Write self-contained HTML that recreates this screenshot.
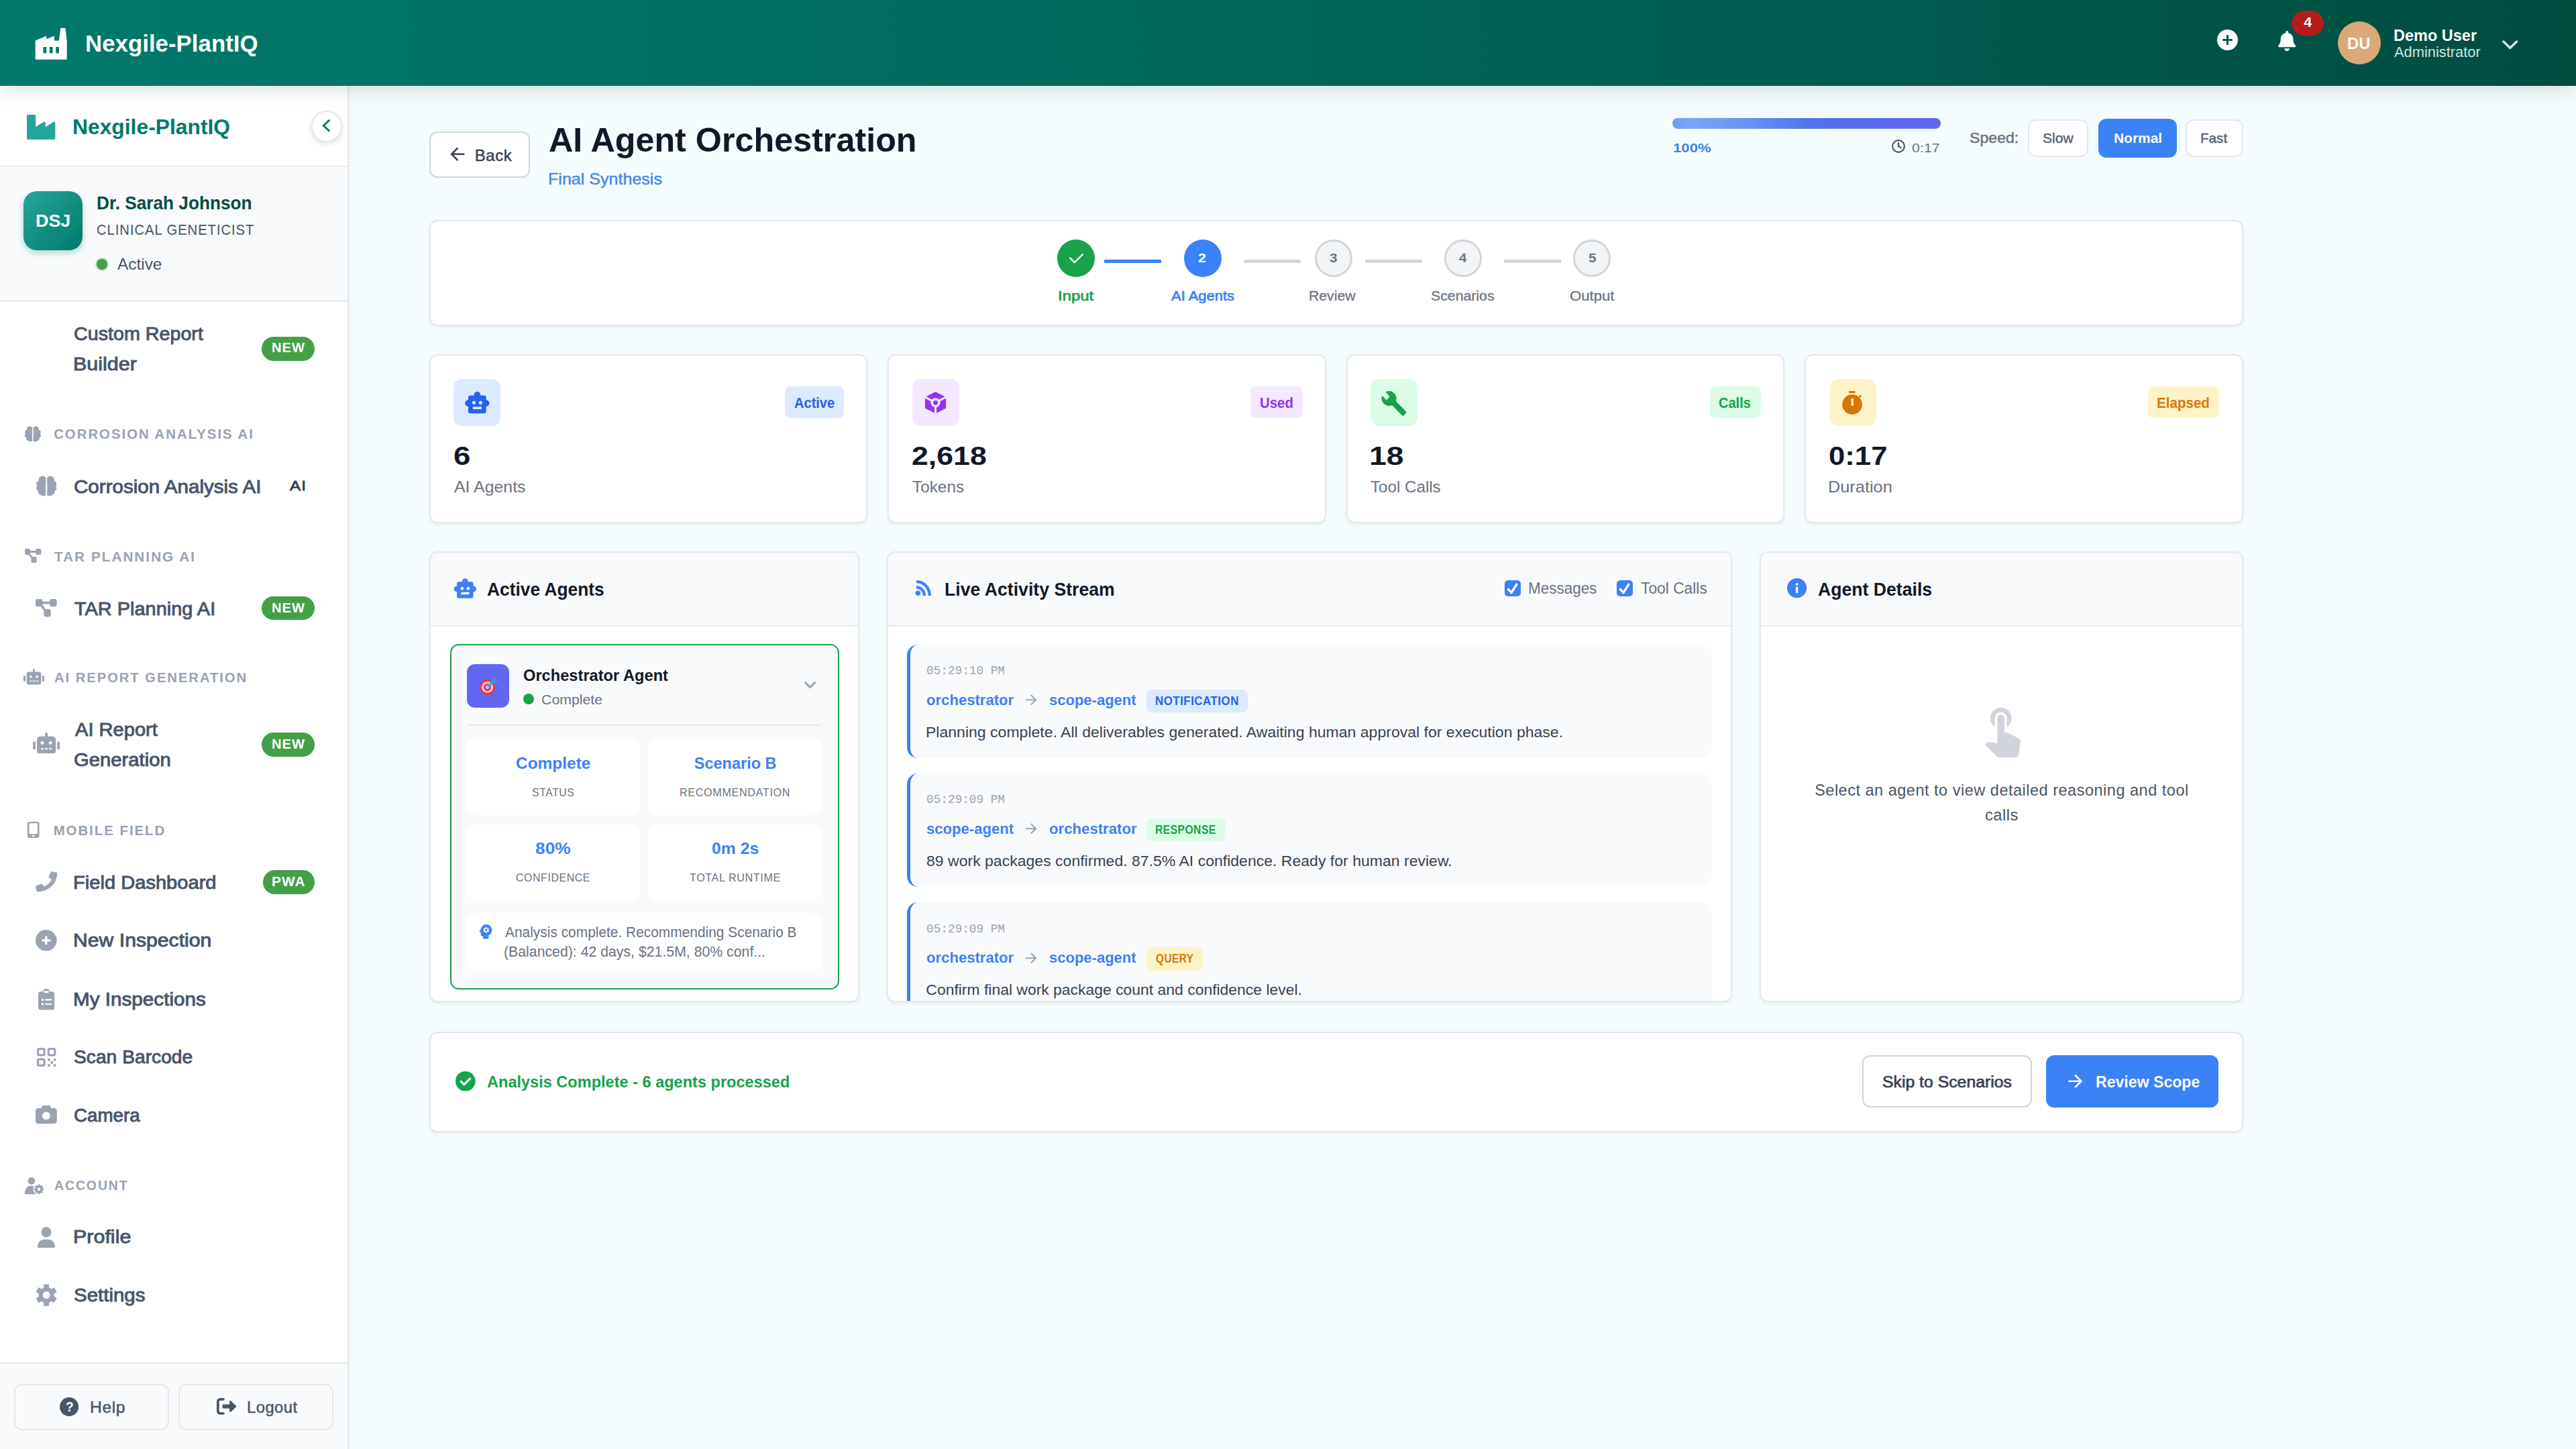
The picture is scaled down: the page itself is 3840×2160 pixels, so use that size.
<!DOCTYPE html>
<html lang="en"><head><meta charset="utf-8"><title>Nexgile-PlantIQ - AI Agent Orchestration</title>
<style>
html,body{margin:0;padding:0}
body{width:3840px;height:2160px;position:relative;overflow:hidden;background:#f5fcfe;font-family:"Liberation Sans",sans-serif}
div,svg,span.t{position:absolute;box-sizing:border-box}
span.t{white-space:nowrap;transform-origin:0 50%}
svg{overflow:visible}

</style></head><body>
<div style="left:0px;top:0px;width:3840px;height:128px;background:linear-gradient(90deg,#00796b 0%,#00695c 45%,#004d40 100%);box-shadow:0 4px 30px rgba(0,0,0,.14);z-index:5"></div>
<div style="left:0;top:0;width:3840px;height:128px;z-index:6">
<svg style="left:47.6px;top:37px" width="56.40" height="56.40" viewBox="0 0 24 24" ><path fill="#fff" fill-rule="evenodd" d="M22 22H2V10l7-3v2l5-2v3h3l1-8h3l1 8v12zM7 14v4h2v-4H7zm4 0v4h2v-4h-2zm4 0v4h2v-4h-2z"/></svg>
<span id="t1" class="t" style="left:127.47px;top:46px;font-size:34.3px;line-height:38px;color:#fff;font-weight:700;transform:scaleX(1.0162);">Nexgile-PlantIQ</span>
<svg style="left:3305px;top:44.4px" width="31.00" height="31.00" viewBox="0 0 31 31" ><circle cx="15.5" cy="15.5" r="15.5" fill="#fff"/><path d="M15.5 8.2v14.6M8.2 15.5h14.6" stroke="#005a4c" stroke-width="3" fill="none"/></svg>
<svg style="left:3396px;top:45.5px" width="26.20" height="29.90" viewBox="0 0 448 512" ><path fill="#fff" d="M224 512c35.32 0 63.97-28.65 63.97-64H160.03c0 35.35 28.65 64 63.97 64zm215.39-149.71c-19.32-20.76-55.47-51.99-55.47-154.29 0-77.7-54.48-139.9-127.94-155.16V32c0-17.67-14.32-32-31.98-32s-31.98 14.33-31.98 32v20.84C118.56 68.1 64.08 130.3 64.08 208c0 102.3-36.15 133.53-55.47 154.29-6 6.45-8.66 14.16-8.61 21.71.11 16.4 12.98 32 32.1 32h383.8c19.12 0 32-15.6 32.1-32 .05-7.55-2.61-15.27-8.61-21.71z"/></svg>
<div style="left:3416px;top:16.2px;width:48.4px;height:36.5px;background:#b71c1c;border-radius:18.5px"></div>
<span id="t2" class="t" style="left:3434.36px;top:21px;font-size:20.58px;line-height:23px;color:#fff;font-weight:700;transform:scaleX(1.0788);">4</span>
<div style="left:3485px;top:32px;width:64px;height:64px;background:#dba978;border-radius:50%"></div>
<span id="t3" class="t" style="left:3499.31px;top:52px;font-size:23.52px;line-height:26px;color:#fff;font-weight:700;transform:scaleX(1.0110);">DU</span>
<span id="t4" class="t" style="left:3567.73px;top:39px;font-size:24.01px;line-height:27px;color:#fff;font-weight:700;transform:scaleX(0.9788);">Demo User</span>
<span id="t5" class="t" style="left:3569.26px;top:65px;font-size:21.56px;line-height:25px;color:#cfe6e2;transform:scaleX(1.0139);">Administrator</span>
<svg style="left:3729.5px;top:59.5px" width="23.50" height="14.00" viewBox="0 0 23.5 14" ><path d="M2 2l9.75 9.5L21.5 2" stroke="#d5e9e5" stroke-width="3.4" fill="none" stroke-linecap="round" stroke-linejoin="round"/></svg>
</div>
<div style="left:0px;top:128px;width:520px;height:2032px;background:#fff;border-right:2px solid #e5e7eb;box-shadow:2px 0 6px rgba(0,0,0,.03)"></div>
<svg style="left:40.3px;top:170.8px" width="42.40" height="37.10" viewBox="0 0 512 448" ><path fill="#26a69a" d="M475.115 131.781L336 220.309v-68.28c0-18.916-20.931-30.399-36.885-20.248L160 220.309V24c0-13.255-10.745-24-24-24H24C10.745 0 0 10.745 0 24v400c0 13.255 10.745 24 24 24h464c13.255 0 24-10.745 24-24V152.029c0-18.917-20.931-30.399-36.885-20.248z"/></svg>
<span id="t6" class="t" style="left:108.27px;top:172px;font-size:31.36px;line-height:35px;color:#00796b;font-weight:700;transform:scaleX(1.0142);">Nexgile-PlantIQ</span>
<div style="left:463.5px;top:165px;width:46.5px;height:46.5px;background:#fff;border:2px solid #e5e7eb;border-radius:50%;box-shadow:0 3px 8px rgba(0,0,0,.12)"></div>
<svg style="left:479.5px;top:178px" width="12.50" height="18.50" viewBox="0 0 12.5 18.5" ><path d="M10.5 1.5L2.2 9.25l8.3 7.75" stroke="#00796b" stroke-width="3" fill="none" stroke-linecap="round" stroke-linejoin="round"/></svg>
<div style="left:0px;top:247px;width:518px;height:2px;background:#e5e7eb"></div>
<div style="left:0px;top:249px;width:518px;height:199px;background:#f8fafc"></div>
<div style="left:0px;top:447.5px;width:518px;height:2px;background:#e5e7eb"></div>
<div style="left:35.3px;top:284.7px;width:88px;height:88px;background:linear-gradient(135deg,#26a69a 0%,#00796b 100%);border-radius:20px;box-shadow:0 4px 10px rgba(0,105,92,.28)"></div>
<span id="t7" class="t" style="left:53.3px;top:315px;font-size:25.48px;line-height:28px;color:#fff;font-weight:700;transform:scaleX(1.0542);">DSJ</span>
<span id="t8" class="t" style="left:143.75px;top:287px;font-size:27.44px;line-height:31px;color:#004d40;font-weight:700;transform:scaleX(0.9548);">Dr. Sarah Johnson</span>
<span id="t9" class="t" style="left:144.47px;top:330px;font-size:21.56px;line-height:25px;color:#4b5563;letter-spacing:1px;transform:scaleX(0.9395);">CLINICAL GENETICIST</span>
<div style="left:144.4px;top:385.6px;width:16px;height:16px;background:#43a047;border-radius:50%;box-shadow:0 0 0 2px rgba(67,160,71,.30)"></div>
<span id="t10" class="t" style="left:175.25px;top:380px;font-size:24.01px;line-height:27px;color:#4b5563;transform:scaleX(1.0164);">Active</span>
<span id="t11" class="t" style="left:110.14px;top:482px;font-size:27.44px;line-height:31px;color:#475569;-webkit-text-stroke:0.9px currentColor;transform:scaleX(1.0453);">Custom Report</span>
<span id="t12" class="t" style="left:109.1px;top:527px;font-size:27.44px;line-height:31px;color:#475569;-webkit-text-stroke:0.9px currentColor;transform:scaleX(1.1110);">Builder</span>
<div style="left:390.2px;top:502px;width:79px;height:35.5px;background:#43a047;border-radius:17.75px"></div>
<span id="t13" class="t" style="left:404.55px;top:507px;font-size:19.6px;line-height:22px;color:#fff;font-weight:700;letter-spacing:1px;transform:scaleX(1.0283);">NEW</span>
<span id="t14" class="t" style="left:80.16px;top:636px;font-size:20.38px;line-height:22px;color:#98a2b3;font-weight:700;letter-spacing:2px;">CORROSION ANALYSIS AI</span>
<span id="t15" class="t" style="left:110.1px;top:710px;font-size:27.44px;line-height:31px;color:#475569;-webkit-text-stroke:0.9px currentColor;transform:scaleX(1.0778);">Corrosion Analysis AI</span>
<span id="t16" class="t" style="left:431.55px;top:713px;font-size:19.6px;line-height:22px;color:#374151;letter-spacing:1px;-webkit-text-stroke:0.8px currentColor;transform:scaleX(1.2338);">AI</span>
<span id="t17" class="t" style="left:80.77px;top:819px;font-size:20.38px;line-height:22px;color:#98a2b3;font-weight:700;letter-spacing:2px;transform:scaleX(1.0167);">TAR PLANNING AI</span>
<span id="t18" class="t" style="left:110.95px;top:892px;font-size:27.44px;line-height:31px;color:#475569;-webkit-text-stroke:0.9px currentColor;transform:scaleX(1.0548);">TAR Planning AI</span>
<div style="left:390.2px;top:888.7px;width:79px;height:35.5px;background:#43a047;border-radius:17.75px"></div>
<span id="t19" class="t" style="left:404.55px;top:895px;font-size:19.6px;line-height:22px;color:#fff;font-weight:700;letter-spacing:1px;transform:scaleX(1.0283);">NEW</span>
<span id="t20" class="t" style="left:80.5px;top:999px;font-size:20.38px;line-height:22px;color:#98a2b3;font-weight:700;letter-spacing:2px;transform:scaleX(0.9908);">AI REPORT GENERATION</span>
<span id="t21" class="t" style="left:111.54px;top:1072px;font-size:27.44px;line-height:31px;color:#475569;-webkit-text-stroke:0.9px currentColor;transform:scaleX(1.0601);">AI Report</span>
<span id="t22" class="t" style="left:110.13px;top:1117px;font-size:27.44px;line-height:31px;color:#475569;-webkit-text-stroke:0.9px currentColor;transform:scaleX(1.0656);">Generation</span>
<div style="left:390.2px;top:1092.3px;width:79px;height:35.5px;background:#43a047;border-radius:17.75px"></div>
<span id="t23" class="t" style="left:404.55px;top:1098px;font-size:19.6px;line-height:22px;color:#fff;font-weight:700;letter-spacing:1px;transform:scaleX(1.0283);">NEW</span>
<span id="t24" class="t" style="left:79.63px;top:1227px;font-size:20.38px;line-height:22px;color:#98a2b3;font-weight:700;letter-spacing:2px;">MOBILE FIELD</span>
<span id="t25" class="t" style="left:109.21px;top:1300px;font-size:27.44px;line-height:31px;color:#475569;-webkit-text-stroke:0.9px currentColor;transform:scaleX(1.0608);">Field Dashboard</span>
<div style="left:391.8px;top:1297.2px;width:77.2px;height:35.5px;background:#43a047;border-radius:17.75px"></div>
<span id="t26" class="t" style="left:405px;top:1303px;font-size:19.6px;line-height:22px;color:#fff;font-weight:700;letter-spacing:1px;transform:scaleX(1.0644);">PWA</span>
<span id="t27" class="t" style="left:109.12px;top:1386px;font-size:27.44px;line-height:31px;color:#475569;-webkit-text-stroke:0.9px currentColor;transform:scaleX(1.0999);">New Inspection</span>
<span id="t28" class="t" style="left:109.17px;top:1474px;font-size:27.44px;line-height:31px;color:#475569;-webkit-text-stroke:0.9px currentColor;transform:scaleX(1.0809);">My Inspections</span>
<span id="t29" class="t" style="left:110.32px;top:1560px;font-size:27.44px;line-height:31px;color:#475569;-webkit-text-stroke:0.9px currentColor;transform:scaleX(1.0283);">Scan Barcode</span>
<span id="t30" class="t" style="left:110.19px;top:1647px;font-size:27.44px;line-height:31px;color:#475569;-webkit-text-stroke:0.9px currentColor;transform:scaleX(1.0114);">Camera</span>
<span id="t31" class="t" style="left:80.52px;top:1756px;font-size:20.38px;line-height:22px;color:#98a2b3;font-weight:700;letter-spacing:2px;transform:scaleX(0.9552);">ACCOUNT</span>
<span id="t32" class="t" style="left:109.1px;top:1828px;font-size:27.44px;line-height:31px;color:#475569;-webkit-text-stroke:0.9px currentColor;transform:scaleX(1.1102);">Profile</span>
<span id="t33" class="t" style="left:110.26px;top:1915px;font-size:27.44px;line-height:31px;color:#475569;-webkit-text-stroke:0.9px currentColor;transform:scaleX(1.0743);">Settings</span>
<svg style="left:37.1px;top:635px" width="23.90" height="23.70" viewBox="0 0 100 100" preserveAspectRatio="none"><defs><clipPath id="bl37"><rect x="0" y="0" width="46.5" height="100"/></clipPath><clipPath id="br37"><rect x="53.5" y="0" width="46.5" height="100"/></clipPath></defs><g fill="#9aa3b2"><g clip-path="url(#bl37)"><circle cx="31" cy="21" r="19"/><circle cx="16" cy="40" r="15.5"/><circle cx="14" cy="61" r="14"/><circle cx="24" cy="78" r="15"/><circle cx="36" cy="86" r="13"/><rect x="20" y="10" width="40" height="86" rx="6"/></g><g clip-path="url(#br37)"><circle cx="69" cy="21" r="19"/><circle cx="84" cy="40" r="15.5"/><circle cx="86" cy="61" r="14"/><circle cx="76" cy="78" r="15"/><circle cx="64" cy="86" r="13"/><rect x="40" y="10" width="40" height="86" rx="6"/></g></g></svg>
<svg style="left:53.8px;top:709px" width="30.50" height="30.70" viewBox="0 0 100 100" preserveAspectRatio="none"><defs><clipPath id="bl53"><rect x="0" y="0" width="46.5" height="100"/></clipPath><clipPath id="br53"><rect x="53.5" y="0" width="46.5" height="100"/></clipPath></defs><g fill="#9aa3b2"><g clip-path="url(#bl53)"><circle cx="31" cy="21" r="19"/><circle cx="16" cy="40" r="15.5"/><circle cx="14" cy="61" r="14"/><circle cx="24" cy="78" r="15"/><circle cx="36" cy="86" r="13"/><rect x="20" y="10" width="40" height="86" rx="6"/></g><g clip-path="url(#br53)"><circle cx="69" cy="21" r="19"/><circle cx="84" cy="40" r="15.5"/><circle cx="86" cy="61" r="14"/><circle cx="76" cy="78" r="15"/><circle cx="64" cy="86" r="13"/><rect x="40" y="10" width="40" height="86" rx="6"/></g></g></svg>
<svg style="left:37.1px;top:818.3px" width="24.40" height="20.90" viewBox="0 32 576 448" preserveAspectRatio="none"><path fill="#9aa3b2" d="M0 80C0 53.5 21.5 32 48 32h96c26.5 0 48 21.5 48 48V96H384V80c0-26.5 21.5-48 48-48h96c26.5 0 48 21.5 48 48v96c0 26.5-21.5 48-48 48H432c-26.5 0-48-21.5-48-48V160H192v16c0 1.7-.1 3.400-.3 5L272 288h96c26.500 0 48 21.500 48 48v96c0 26.500-21.500 48-48 48H272c-26.500 0-48-21.500-48-48V336c0-1.700 .1-3.400 .3-5L144 224H48c-26.500 0-48-21.500-48-48V80z"/></svg>
<svg style="left:53.1px;top:893px" width="31.60" height="26.40" viewBox="0 32 576 448" preserveAspectRatio="none"><path fill="#9aa3b2" d="M0 80C0 53.5 21.5 32 48 32h96c26.5 0 48 21.5 48 48V96H384V80c0-26.5 21.5-48 48-48h96c26.5 0 48 21.5 48 48v96c0 26.5-21.5 48-48 48H432c-26.5 0-48-21.5-48-48V160H192v16c0 1.7-.1 3.400-.3 5L272 288h96c26.500 0 48 21.500 48 48v96c0 26.500-21.500 48-48 48H272c-26.500 0-48-21.500-48-48V336c0-1.700 .1-3.400 .3-5L144 224H48c-26.500 0-48-21.500-48-48V80z"/></svg>
<svg style="left:34.9px;top:996.9px" width="31.10" height="23.40" viewBox="0 0 640 512" preserveAspectRatio="none"><path fill="#9aa3b2" d="M32,224H64V416H32A31.96166,31.96166,0,0,1,0,384V256A31.96166,31.96166,0,0,1,32,224Zm512-48V448a64.06328,64.06328,0,0,1-64,64H160a64.06328,64.06328,0,0,1-64-64V176a79.974,79.974,0,0,1,80-80H288V32a32,32,0,0,1,64,0V96H464A79.974,79.974,0,0,1,544,176ZM264,256a40,40,0,1,0-40,40A39.997,39.997,0,0,0,264,256Zm-8,128H192v32h64Zm96,0H288v32h64ZM456,256a40,40,0,1,0-40,40A39.997,39.997,0,0,0,456,256Zm-8,128H384v32h64ZM640,256V384a31.96166,31.96166,0,0,1-32,32H576V224h32A31.96166,31.96166,0,0,1,640,256Z"/></svg>
<svg style="left:49px;top:1092px" width="40.20" height="31.00" viewBox="0 0 640 512" preserveAspectRatio="none"><path fill="#9aa3b2" d="M32,224H64V416H32A31.96166,31.96166,0,0,1,0,384V256A31.96166,31.96166,0,0,1,32,224Zm512-48V448a64.06328,64.06328,0,0,1-64,64H160a64.06328,64.06328,0,0,1-64-64V176a79.974,79.974,0,0,1,80-80H288V32a32,32,0,0,1,64,0V96H464A79.974,79.974,0,0,1,544,176ZM264,256a40,40,0,1,0-40,40A39.997,39.997,0,0,0,264,256Zm-8,128H192v32h64Zm96,0H288v32h64ZM456,256a40,40,0,1,0-40,40A39.997,39.997,0,0,0,456,256Zm-8,128H384v32h64ZM640,256V384a31.96166,31.96166,0,0,1-32,32H576V224h32A31.96166,31.96166,0,0,1,640,256Z"/></svg>
<svg style="left:40.6px;top:1224.7px" width="17.60" height="24.10" viewBox="0 0 320 512" preserveAspectRatio="none"><path fill="#9aa3b2" d="M272 0H48C21.5 0 0 21.5 0 48v416c0 26.5 21.5 48 48 48h224c26.5 0 48-21.5 48-48V48c0-26.5-21.5-48-48-48zM160 480c-17.7 0-32-14.3-32-32s14.3-32 32-32 32 14.3 32 32-14.3 32-32 32zm112-108c0 6.6-5.4 12-12 12H60c-6.6 0-12-5.4-12-12V60c0-6.6 5.4-12 12-12h200c6.6 0 12 5.4 12 12v312z"/></svg>
<svg style="left:53px;top:1299.2px" width="32.20" height="30.40" viewBox="0 0 512 512" preserveAspectRatio="none"><path fill="#9aa3b2" d="M493.4 24.6l-104-24c-11.3-2.6-22.9 3.3-27.5 13.9l-48 112c-4.2 9.8-1.4 21.3 6.9 28l60.6 49.6c-36 76.7-98.9 140.5-177.2 177.2l-49.6-60.6c-6.8-8.3-18.2-11.1-28-6.9l-112 48C3.9 366.5-2 378.1.6 389.4l24 104C27.1 504.2 36.7 512 48 512c256.1 0 464-207.5 464-464 0-11.2-7.7-20.9-18.6-23.4z"/></svg>
<svg style="left:53.2px;top:1386px" width="31.60" height="31.60" viewBox="0 0 32 32" ><circle cx="16" cy="16" r="16" fill="#9aa3b2"/><path d="M16 9.5v13M9.5 16h13" stroke="#fff" stroke-width="3.2" fill="none"/></svg>
<svg style="left:57.2px;top:1473.6px" width="24.10" height="31.40" viewBox="0 0 384 512" preserveAspectRatio="none"><path fill="#9aa3b2" fill-rule="evenodd" d="M56 64h56c0-36 34-64 80-64s80 28 80 64h56c31 0 56 25 56 56v336c0 31-25 56-56 56H56c-31 0-56-25-56-56V120c0-31 25-56 56-56z M152 52h80c14 0 22 10 22 22s-8 22-22 22h-80c-14 0-22-10-22-22s8-22 22-22z M104 238a28 28 0 1 0 0.100 0z M180 250h128c11 0 18 7 18 17s-7 17-18 17H180c-11 0-18-7-18-17s7-17 18-17z M104 342a28 28 0 1 0 0.100 0z M180 354h128c11 0 18 7 18 17s-7 17-18 17H180c-11 0-18-7-18-17s7-17 18-17z"/></svg>
<svg style="left:55px;top:1561.7px" width="28.40" height="27.80" viewBox="0 0 448 448" preserveAspectRatio="none"><rect x="25" y="25" width="150" height="150" rx="30" fill="none" stroke="#9aa3b2" stroke-width="50"/><rect x="273" y="25" width="150" height="150" rx="30" fill="none" stroke="#9aa3b2" stroke-width="50"/><rect x="25" y="273" width="150" height="150" rx="30" fill="none" stroke="#9aa3b2" stroke-width="50"/><rect x="256" y="256" width="58" height="58" rx="14" fill="#9aa3b2"/><rect x="390" y="256" width="58" height="58" rx="14" fill="#9aa3b2"/><rect x="323" y="323" width="58" height="58" rx="14" fill="#9aa3b2"/><rect x="256" y="390" width="58" height="58" rx="14" fill="#9aa3b2"/><rect x="390" y="390" width="58" height="58" rx="14" fill="#9aa3b2"/></svg>
<svg style="left:53.2px;top:1648px" width="31.80" height="27.00" viewBox="0 0 512 436" preserveAspectRatio="none"><path fill="#9aa3b2" fill-rule="evenodd" d="M64 64h72l18-40c6-14 20-24 36-24h132c16 0 30 10 36 24l18 40h72c35 0 64 29 64 64v244c0 35-29 64-64 64H64c-35 0-64-29-64-64V128c0-35 29-64 64-64z M256 152a96 96 0 1 0 0.100 0z"/></svg>
<svg style="left:37.2px;top:1755.2px" width="28.40" height="25.20" viewBox="0 0 640 568" preserveAspectRatio="none"><circle cx="225" cy="120" r="120" fill="#9aa3b2"/><path fill="#9aa3b2" d="M0 520C0 400 80 290 190 290h70c110 0 190 110 190 230v48H0z"/><circle cx="474" cy="402" r="196" fill="#fff"/><path fill="#9aa3b2" fill-rule="evenodd" d="M441.2 274.1 L445.1 236.5 L502.9 236.5 L506.8 274.1 L541.2 288.4 L570.6 264.6 L611.4 305.4 L587.6 334.8 L601.9 369.2 L639.5 373.1 L639.5 430.9 L601.9 434.8 L587.6 469.2 L611.4 498.6 L570.6 539.4 L541.2 515.6 L506.8 529.9 L502.9 567.5 L445.1 567.5 L441.2 529.9 L406.8 515.6 L377.4 539.4 L336.6 498.6 L360.4 469.2 L346.1 434.8 L308.5 430.9 L308.5 373.1 L346.1 369.2 L360.4 334.8 L336.6 305.4 L377.4 264.6 L406.8 288.4Z M424.0 402.0 a50.0 50.0 0 1 0 100.0 0 a50.0 50.0 0 1 0 -100.0 0Z"/></svg>
<svg style="left:56.1px;top:1829px" width="25.90" height="31.00" viewBox="0 0 448 512" preserveAspectRatio="none"><circle cx="224" cy="128" r="128" fill="#9aa3b2"/><path fill="#9aa3b2" d="M0 482.3C0 383.8 79.8 304 178.3 304h91.4C368.2 304 448 383.8 448 482.3c0 16.4-13.3 29.7-29.7 29.7H29.7C13.3 512 0 498.7 0 482.3z"/></svg>
<svg style="left:52.9px;top:1913.8px" width="32.30" height="33.20" viewBox="0 0 100 100" preserveAspectRatio="none"><path fill="#9aa3b2" fill-rule="evenodd" d="M37.8 16.1 L38.1 1.4 L61.9 1.4 L62.2 16.1 L73.2 22.5 L86.1 15.4 L98.0 36.1 L85.4 43.6 L85.4 56.4 L98.0 63.9 L86.1 84.6 L73.2 77.5 L62.2 83.9 L61.9 98.6 L38.1 98.6 L37.8 83.9 L26.8 77.5 L13.9 84.6 L2.0 63.9 L14.6 56.4 L14.6 43.6 L2.0 36.1 L13.9 15.4 L26.8 22.5Z M33.0 50.0 a17.0 17.0 0 1 0 34.0 0 a17.0 17.0 0 1 0 -34.0 0Z"/></svg>
<div style="left:0px;top:2031.3px;width:518px;height:2px;background:#e5e7eb"></div>
<div style="left:0px;top:2033.3px;width:518px;height:126.7px;background:#f9fafb"></div>
<div style="left:21.4px;top:2062.9px;width:231px;height:69px;background:#f9fafb;border:2px solid #e5e7eb;border-radius:12px"></div>
<div style="left:266.1px;top:2062.9px;width:230.8px;height:69px;background:#f9fafb;border:2px solid #e5e7eb;border-radius:12px"></div>
<svg style="left:89.4px;top:2082.5px" width="28.20" height="28.20" viewBox="0 0 28 28" ><circle cx="14" cy="14" r="14" fill="#475569"/></svg>
<span id="t34" class="t" style="left:97.82px;top:2085px;font-size:20.58px;line-height:23px;color:#fff;font-weight:700;transform:scaleX(0.9284);">?</span>
<span id="t35" class="t" style="left:134.47px;top:2084px;font-size:24.5px;line-height:27px;color:#475569;letter-spacing:0.5px;-webkit-text-stroke:0.5px currentColor;transform:scaleX(1.0112);">Help</span>
<svg style="left:322.5px;top:2084px" width="29.10" height="24.80" viewBox="0 0 512 436" preserveAspectRatio="none"><path d="M176 32H96c-35 0-64 29-64 64v244c0 35 29 64 64 64h80" fill="none" stroke="#475569" stroke-width="64" stroke-linecap="round"/><path fill="#475569" d="M176 166h160v-72c0-22 26-32 41-17l128 124c10 10 10 26 0 36L377 361c-15 15-41 5-41-17v-72H176c-14 0-24-10-24-24v-58c0-14 10-24 24-24z"/></svg>
<span id="t36" class="t" style="left:368.15px;top:2084px;font-size:24.5px;line-height:27px;color:#475569;letter-spacing:0.5px;-webkit-text-stroke:0.5px currentColor;transform:scaleX(0.9701);">Logout</span>
<div style="left:640px;top:195.7px;width:149.8px;height:69.2px;background:#fff;border:2px solid #d1d5db;border-radius:12px"></div>
<svg style="left:665.7px;top:214.2px" width="31.60" height="31.60" viewBox="0 0 24 24" ><path fill="#374151" d="M7.828 11H20v2H7.828l5.364 5.364-1.414 1.414L4 12l7.778-7.778 1.414 1.414z"/></svg>
<span id="t37" class="t" style="left:707.83px;top:218px;font-size:24.01px;line-height:27px;color:#374151;letter-spacing:0.5px;-webkit-text-stroke:0.5px currentColor;">Back</span>
<span id="t38" class="t" style="left:818.15px;top:181px;font-size:49.29px;line-height:55px;color:#111827;font-weight:700;transform:scaleX(1.0204);">AI Agent Orchestration</span>
<span id="t39" class="t" style="left:817.34px;top:253px;font-size:24.01px;line-height:27px;color:#4285ee;-webkit-text-stroke:0.45px currentColor;transform:scaleX(1.0443);">Final Synthesis</span>
<div style="left:2492.8px;top:175.9px;width:400px;height:16px;border-radius:8px;background:linear-gradient(90deg,#6e9ef6 0%,#78a6f8 8%,#6591f4 30%,#4f73ee 52%,#5969f0 75%,#6366f1 100%)"></div>
<span id="t40" class="t" style="left:2493.5px;top:210px;font-size:19.11px;line-height:21px;color:#3b82f6;font-weight:700;transform:scaleX(1.1597);">100%</span>
<svg style="left:2817.8px;top:206.1px" width="24.00" height="24.00" viewBox="0 0 24 24" ><circle cx="12" cy="12" r="8.900" fill="none" stroke="#4b5563" stroke-width="2.100"/><path d="M12 6.800V12l3.700 2.300" fill="none" stroke="#4b5563" stroke-width="2.100" stroke-linecap="round" stroke-linejoin="round"/></svg>
<span id="t41" class="t" style="left:2850.16px;top:210px;font-size:19.11px;line-height:21px;color:#6b7280;transform:scaleX(1.1241);">0:17</span>
<span id="t42" class="t" style="left:2935.55px;top:193px;font-size:21.95px;line-height:25px;color:#6b7280;-webkit-text-stroke:0.5px currentColor;transform:scaleX(1.0537);">Speed:</span>
<div style="left:3023.2px;top:178px;width:89.5px;height:56.4px;background:#fff;border:2px solid #e5e7eb;border-radius:12px"></div>
<span id="t43" class="t" style="left:3044.64px;top:195px;font-size:20.38px;line-height:22px;color:#566070;-webkit-text-stroke:0.45px currentColor;transform:scaleX(1.0355);">Slow</span>
<div style="left:3128px;top:177.3px;width:116.8px;height:57.6px;background:#3b82f6;border-radius:12px"></div>
<span id="t44" class="t" style="left:3150.8px;top:195px;font-size:20.38px;line-height:22px;color:#fff;font-weight:700;transform:scaleX(1.0275);">Normal</span>
<div style="left:3258.4px;top:178px;width:85.2px;height:56.4px;background:#fff;border:2px solid #e5e7eb;border-radius:12px"></div>
<span id="t45" class="t" style="left:3280.41px;top:195px;font-size:20.38px;line-height:22px;color:#566070;-webkit-text-stroke:0.45px currentColor;transform:scaleX(1.0136);">Fast</span>
<div style="left:640px;top:328px;width:2703.5px;height:158.4px;background:#fff;border:2px solid #e5e7eb;border-radius:12px;box-shadow:0 2px 5px rgba(0,0,0,.06)"></div>
<div style="left:1576px;top:356.6px;width:56px;height:56px;background:#16a34a;border-radius:50%;"></div>
<svg style="left:1588.6px;top:369.6px" width="30.80" height="30.80" viewBox="0 0 24 24" ><path fill="#fff" d="M10 15.172l9.192-9.193 1.415 1.414L10 18l-6.364-6.364 1.414-1.414z"/></svg>
<div style="left:1646.2px;top:386.6px;width:85px;height:5.5px;background:#3b82f6;border-radius:1px"></div>
<div style="left:1764.8px;top:356.6px;width:56px;height:56px;background:#3b82f6;border-radius:50%;"></div>
<span id="t46" class="t" style="left:1786.46px;top:374px;font-size:19.11px;line-height:21px;color:#fff;font-weight:700;transform:scaleX(1.1180);">2</span>
<div style="left:1854.4px;top:386.6px;width:85px;height:5.5px;background:#d1d5db;border-radius:1px"></div>
<div style="left:1959.6px;top:356.6px;width:56px;height:56px;background:#f3f4f6;border-radius:50%;border:3px solid #d1d5db;"></div>
<span id="t47" class="t" style="left:1981.83px;top:374px;font-size:19.11px;line-height:21px;color:#6b7280;font-weight:700;transform:scaleX(1.0829);">3</span>
<div style="left:2035.3px;top:386.6px;width:85px;height:5.5px;background:#d1d5db;border-radius:1px"></div>
<div style="left:2152.9px;top:356.6px;width:56px;height:56px;background:#f3f4f6;border-radius:50%;border:3px solid #d1d5db;"></div>
<span id="t48" class="t" style="left:2175.29px;top:374px;font-size:19.11px;line-height:21px;color:#6b7280;font-weight:700;transform:scaleX(1.0635);">4</span>
<div style="left:2241.5px;top:386.6px;width:85px;height:5.5px;background:#d1d5db;border-radius:1px"></div>
<div style="left:2345.2px;top:356.6px;width:56px;height:56px;background:#f3f4f6;border-radius:50%;border:3px solid #d1d5db;"></div>
<span id="t49" class="t" style="left:2367.56px;top:374px;font-size:19.11px;line-height:21px;color:#6b7280;font-weight:700;transform:scaleX(1.0818);">5</span>
<span id="t50" class="t" style="left:1576.99px;top:430px;font-size:20.38px;line-height:22px;color:#16a34a;-webkit-text-stroke:0.7px currentColor;transform:scaleX(1.1741);">Input</span>
<span id="t51" class="t" style="left:1746.16px;top:430px;font-size:20.38px;line-height:22px;color:#3b82f6;-webkit-text-stroke:0.7px currentColor;transform:scaleX(1.0790);">AI Agents</span>
<span id="t52" class="t" style="left:1951.46px;top:430px;font-size:20.38px;line-height:22px;color:#6b7280;-webkit-text-stroke:0.3px currentColor;transform:scaleX(1.0408);">Review</span>
<span id="t53" class="t" style="left:2133.43px;top:430px;font-size:20.38px;line-height:22px;color:#6b7280;-webkit-text-stroke:0.3px currentColor;transform:scaleX(1.0440);">Scenarios</span>
<span id="t54" class="t" style="left:2339.75px;top:430px;font-size:20.38px;line-height:22px;color:#6b7280;-webkit-text-stroke:0.3px currentColor;transform:scaleX(1.0881);">Output</span>
<div style="left:640px;top:528px;width:653.4px;height:252.4px;background:#fff;border:2px solid #e5e7eb;border-radius:12px;box-shadow:0 2px 5px rgba(0,0,0,.06)"></div>
<div style="left:676.4px;top:564.9px;width:70px;height:70px;background:#dbeafe;border-radius:13px"></div>
<div style="left:1170px;top:576px;width:88.2px;height:47.4px;background:#dbeafe;border-radius:8px"></div>
<span id="t55" class="t" style="left:1184.2px;top:588px;font-size:21.56px;line-height:25px;color:#2563eb;font-weight:700;transform:scaleX(0.9304);">Active</span>
<span id="t56" class="t" style="left:675.93px;top:657px;font-size:39.69px;line-height:44px;color:#111827;font-weight:700;transform:scaleX(1.1516);">6</span>
<span id="t57" class="t" style="left:676.95px;top:713px;font-size:23.52px;line-height:26px;color:#6b7280;transform:scaleX(1.0584);">AI Agents</span>
<div style="left:1323.4px;top:528px;width:653.4px;height:252.4px;background:#fff;border:2px solid #e5e7eb;border-radius:12px;box-shadow:0 2px 5px rgba(0,0,0,.06)"></div>
<div style="left:1359.8px;top:564.9px;width:70px;height:70px;background:#f3e8ff;border-radius:13px"></div>
<div style="left:1864px;top:576px;width:77.6px;height:47.4px;background:#f3e8ff;border-radius:8px"></div>
<span id="t58" class="t" style="left:1877.67px;top:588px;font-size:21.56px;line-height:25px;color:#9333ea;font-weight:700;transform:scaleX(0.9462);">Used</span>
<span id="t59" class="t" style="left:1359.45px;top:657px;font-size:39.69px;line-height:44px;color:#111827;font-weight:700;transform:scaleX(1.1263);">2,618</span>
<span id="t60" class="t" style="left:1359.85px;top:713px;font-size:23.52px;line-height:26px;color:#6b7280;transform:scaleX(1.0350);">Tokens</span>
<div style="left:2006.8px;top:528px;width:653.4px;height:252.4px;background:#fff;border:2px solid #e5e7eb;border-radius:12px;box-shadow:0 2px 5px rgba(0,0,0,.06)"></div>
<div style="left:2043.2px;top:564.9px;width:70px;height:70px;background:#dcfce7;border-radius:13px"></div>
<div style="left:2548.5px;top:576px;width:76.5px;height:47.4px;background:#dcfce7;border-radius:8px"></div>
<span id="t61" class="t" style="left:2562.28px;top:588px;font-size:21.56px;line-height:25px;color:#16a34a;font-weight:700;transform:scaleX(0.9287);">Calls</span>
<span id="t62" class="t" style="left:2041.49px;top:657px;font-size:39.69px;line-height:44px;color:#111827;font-weight:700;transform:scaleX(1.1653);">18</span>
<span id="t63" class="t" style="left:2043.26px;top:713px;font-size:23.52px;line-height:26px;color:#6b7280;transform:scaleX(1.0271);">Tool Calls</span>
<div style="left:2690.2px;top:528px;width:653.4px;height:252.4px;background:#fff;border:2px solid #e5e7eb;border-radius:12px;box-shadow:0 2px 5px rgba(0,0,0,.06)"></div>
<div style="left:2726.6px;top:564.9px;width:70px;height:70px;background:#fef3c7;border-radius:13px"></div>
<div style="left:3201.5px;top:576px;width:106.9px;height:47.4px;background:#fef3c7;border-radius:8px"></div>
<span id="t64" class="t" style="left:3214.62px;top:588px;font-size:21.56px;line-height:25px;color:#d97706;font-weight:700;transform:scaleX(0.9552);">Elapsed</span>
<span id="t65" class="t" style="left:2726.07px;top:657px;font-size:39.69px;line-height:44px;color:#111827;font-weight:700;transform:scaleX(1.1013);">0:17</span>
<span id="t66" class="t" style="left:2725.12px;top:713px;font-size:23.52px;line-height:26px;color:#6b7280;transform:scaleX(1.0769);">Duration</span>
<svg style="left:677.1px;top:564.9px" width="70.00" height="70.00" viewBox="0 0 70 70" ><g fill="#2563eb"><rect x="21" y="24.5" width="26.7" height="26.7" rx="3.2"/><circle cx="34.4" cy="23.6" r="4.8"/><circle cx="21" cy="36.1" r="4.8"/><circle cx="47.7" cy="36.1" r="4.8"/></g><g fill="#dbeafe"><circle cx="29.5" cy="35.3" r="2.6"/><circle cx="39.3" cy="35.3" r="2.6"/><rect x="27.8" y="41.3" width="13.2" height="3.7"/></g></svg>
<svg style="left:1378.8px;top:584.2px" width="31.10" height="32.60" viewBox="0 0 200 210" preserveAspectRatio="none"><path fill="#9333ea" d="M100 0l100 52v106l-100 52L0 158V52z"/><path d="M100 105L3 52M100 105l97-53M100 105v103" stroke="#f3e8ff" stroke-width="20" fill="none"/><circle cx="100" cy="105" r="45" fill="#f3e8ff"/><circle cx="100" cy="105" r="22" fill="#9333ea"/></svg>
<svg style="left:2058.8px;top:582.9px" width="37.30" height="36.50" viewBox="0 0 240 235" preserveAspectRatio="none"><g fill="#16a34a"><path d="M75 0a72 72 0 0 1 66 98l95 95a14 14 0 0 1 0 20l-18 18a14 14 0 0 1-20 0l-95-95A72 72 0 0 1 8 44l42 42 32-32L42 8A72 72 0 0 1 75 0z"/></g></svg>
<svg style="left:2745.5px;top:582.6px" width="30.10" height="35.10" viewBox="0 0 194 226" preserveAspectRatio="none"><g fill="#d97706"><circle cx="97" cy="129" r="96"/><rect x="65" y="0" width="62" height="20"/><path d="M160 52l16-16 12 12-16 16z"/></g><rect x="87" y="72" width="22" height="68" fill="#fef3c7"/></svg>
<div style="left:640px;top:822px;width:640.5px;height:672px;background:#fff;border:2px solid #e5e7eb;border-radius:12px;box-shadow:0 2px 5px rgba(0,0,0,.06);overflow:hidden"><div style="left:0;top:0;width:100%;height:109.8px;background:#f9fafb;border-bottom:2px solid #e5e7eb"></div></div>
<svg style="left:662px;top:844.7px" width="63.91" height="63.91" viewBox="0 0 70 70" ><g fill="#3b82f6"><rect x="21" y="24.5" width="26.7" height="26.7" rx="3.2"/><circle cx="34.4" cy="23.6" r="4.8"/><circle cx="21" cy="36.1" r="4.8"/><circle cx="47.7" cy="36.1" r="4.8"/></g><g fill="#f9fafb"><circle cx="29.5" cy="35.3" r="2.6"/><circle cx="39.3" cy="35.3" r="2.6"/><rect x="27.8" y="41.3" width="13.2" height="3.7"/></g></svg>
<span id="t67" class="t" style="left:726.34px;top:863px;font-size:27.44px;line-height:31px;color:#111827;font-weight:700;transform:scaleX(0.9598);">Active Agents</span>
<div style="left:671px;top:960.4px;width:580.3px;height:514.7px;background:#f9fafb;border:2px solid #16a34a;border-radius:13px"></div>
<div style="left:696.3px;top:990.1px;width:62.7px;height:64.7px;background:#6366f1;border-radius:12px"></div>
<svg style="left:713.5px;top:1007.5px" width="29.00" height="29.00" viewBox="0 0 58 58" ><circle cx="25" cy="33" r="23.500" fill="#e2365c"/><circle cx="25" cy="33" r="17" fill="#f3cfdb"/><circle cx="25" cy="33" r="11" fill="#e2365c"/><circle cx="25" cy="33" r="5" fill="#f3cfdb"/><path d="M25.500 32.500L31 27" stroke="#7a8aa0" stroke-width="3" stroke-linecap="round"/><path d="M30 28L44 14" stroke="#3fa4e8" stroke-width="8" stroke-linecap="round"/><path d="M39 9l3 8 8 3 9-8-9-2-2-9z" fill="#3b8fe0"/></svg>
<span id="t68" class="t" style="left:780.33px;top:993px;font-size:24.01px;line-height:27px;color:#111827;font-weight:700;transform:scaleX(0.9854);">Orchestrator Agent</span>
<div style="left:779.8px;top:1033.8px;width:16px;height:16px;background:#16a34a;border-radius:50%"></div>
<span id="t69" class="t" style="left:806.62px;top:1032px;font-size:20.38px;line-height:22px;color:#6b7280;transform:scaleX(1.0458);">Complete</span>
<svg style="left:1198.8px;top:1016px" width="17.20" height="10.50" viewBox="0 0 17.2 10.5" ><path d="M1.6 1.6l7 7 7-7" stroke="#9ca3af" stroke-width="3" fill="none" stroke-linecap="round" stroke-linejoin="round"/></svg>
<div style="left:696.4px;top:1079.5px;width:528.3px;height:2px;background:#e5e7eb"></div>
<div style="left:696px;top:1102.3px;width:258.2px;height:112.4px;background:#fff;border-radius:12px"></div>
<span id="t70" class="t" style="left:768.9px;top:1125px;font-size:23.52px;line-height:26px;color:#3b82f6;font-weight:700;transform:scaleX(1.0400);">Complete</span>
<span id="t71" class="t" style="left:792.88px;top:1172px;font-size:16.95px;line-height:19px;color:#6b7280;letter-spacing:0.6px;transform:scaleX(0.9352);">STATUS</span>
<div style="left:966.3px;top:1102.3px;width:258.2px;height:112.4px;background:#fff;border-radius:12px"></div>
<span id="t72" class="t" style="left:1034.72px;top:1125px;font-size:23.52px;line-height:26px;color:#3b82f6;font-weight:700;">Scenario B</span>
<span id="t73" class="t" style="left:1013.36px;top:1172px;font-size:16.95px;line-height:19px;color:#6b7280;letter-spacing:0.6px;transform:scaleX(0.9606);">RECOMMENDATION</span>
<div style="left:696px;top:1229.3px;width:258.2px;height:112.4px;background:#fff;border-radius:12px"></div>
<span id="t74" class="t" style="left:797.76px;top:1252px;font-size:23.52px;line-height:26px;color:#3b82f6;font-weight:700;transform:scaleX(1.1201);">80%</span>
<span id="t75" class="t" style="left:769.09px;top:1299px;font-size:16.95px;line-height:19px;color:#6b7280;letter-spacing:0.6px;transform:scaleX(0.9413);">CONFIDENCE</span>
<div style="left:966.3px;top:1229.3px;width:258.2px;height:112.4px;background:#fff;border-radius:12px"></div>
<span id="t76" class="t" style="left:1060.62px;top:1252px;font-size:23.52px;line-height:26px;color:#3b82f6;font-weight:700;transform:scaleX(1.0541);">0m 2s</span>
<span id="t77" class="t" style="left:1028.24px;top:1299px;font-size:16.95px;line-height:19px;color:#6b7280;letter-spacing:0.6px;transform:scaleX(0.9562);">TOTAL RUNTIME</span>
<div style="left:696px;top:1361.3px;width:528.5px;height:86.8px;background:#fff;border-radius:12px"></div>
<svg style="left:714.4px;top:1378.2px" width="19.40" height="21.60" viewBox="0 0 19.4 21.6" ><g fill="#3b82f6"><circle cx="10.900" cy="8.450" r="8.400"/><path d="M2.900 7.500L0 11.100l2.700.600V14.800c0 1.900 1.300 3 3.500 3V21.600h8.200V15.500z"/></g><path fill="#fff" fill-rule="evenodd" d="M9.8 5.2 L9.8 3.9 L11.9 3.9 L11.9 5.2 L13.0 5.9 L14.2 5.2 L15.3 7.0 L14.1 7.7 L14.1 9.0 L15.3 9.7 L14.2 11.5 L13.0 10.8 L11.9 11.5 L11.9 12.8 L9.8 12.8 L9.8 11.5 L8.7 10.8 L7.5 11.5 L6.4 9.7 L7.6 9.0 L7.6 7.7 L6.4 7.0 L7.5 5.2 L8.7 5.9Z M9.3 8.3 a1.6 1.6 0 1 0 3.1 0 a1.6 1.6 0 1 0 -3.1 0Z"/></svg>
<span id="t78" class="t" style="left:752.56px;top:1377px;font-size:21.56px;line-height:25px;color:#6b7280;transform:scaleX(0.9701);">Analysis complete. Recommending Scenario B</span>
<span id="t79" class="t" style="left:751.28px;top:1406px;font-size:21.56px;line-height:25px;color:#6b7280;transform:scaleX(0.9868);">(Balanced): 42 days, $21.5M, 80% conf...</span>
<div style="left:1321.5px;top:822px;width:1260.8px;height:672px;background:#fff;border:2px solid #e5e7eb;border-radius:12px;box-shadow:0 2px 5px rgba(0,0,0,.06);overflow:hidden"><div style="left:0;top:0;width:100%;height:109.8px;background:#f9fafb;border-bottom:2px solid #e5e7eb"></div></div>
<svg style="left:1363.5px;top:865px" width="24.10" height="23.00" viewBox="0 0 24 23" ><g fill="none" stroke="#3b82f6" stroke-width="4.300"><path d="M2 2.200c10.800 0 19.700 8.500 19.700 20.800"/><path d="M2 10.300c6.600 0 12 5.400 12 12.700"/></g><circle cx="4.300" cy="19.300" r="3.700" fill="#3b82f6"/></svg>
<span id="t80" class="t" style="left:1407.52px;top:863px;font-size:27.44px;line-height:31px;color:#111827;font-weight:700;transform:scaleX(0.9711);">Live Activity Stream</span>
<div style="left:2243.3px;top:864.8px;width:24px;height:24px;background:#3b82f6;border-radius:5px"></div>
<svg style="left:2243.3px;top:864.8px" width="24.00" height="24.00" viewBox="0 0 24 24" ><path d="M4.300 12.300l5.700 6 8.600-13.300" stroke="#fff" stroke-width="3.400" fill="none" stroke-linejoin="miter"/></svg>
<span id="t81" class="t" style="left:2278.46px;top:864px;font-size:23.03px;line-height:26px;color:#6b7280;transform:scaleX(0.9757);">Messages</span>
<div style="left:2409.6px;top:864.8px;width:24px;height:24px;background:#3b82f6;border-radius:5px"></div>
<svg style="left:2409.6px;top:864.8px" width="24.00" height="24.00" viewBox="0 0 24 24" ><path d="M4.300 12.300l5.700 6 8.600-13.300" stroke="#fff" stroke-width="3.400" fill="none" stroke-linejoin="miter"/></svg>
<span id="t82" class="t" style="left:2446.39px;top:864px;font-size:23.03px;line-height:26px;color:#6b7280;transform:scaleX(0.9905);">Tool Calls</span>
<div style="left:1323.5px;top:933.8px;width:1256.8px;height:558.2px;overflow:hidden;border-radius:0 0 10px 10px">
<div style="left:28.5px;top:26.8px;width:1199.5px;height:169.8px;background:#f9fafb;border-left:5.5px solid #3b82f6;border-radius:16px"></div>
<span id="t83" class="t" style="left:57.03px;top:56px;font-size:18.13px;line-height:20px;color:#9ca3af;font-family:'Liberation Mono',monospace;transform:scaleX(0.9787);">05:29:10 PM</span>
<span id="t84" class="t" style="left:57.14px;top:98px;font-size:21.17px;line-height:23px;color:#3b82f6;font-weight:700;transform:scaleX(1.0447);">orchestrator</span>
<svg style="left:201.9px;top:97.6px" width="24.60" height="24.60" viewBox="0 0 24 24" ><path fill="#9ca3af" d="M16.172 11l-5.364-5.364 1.414-1.414L20 12l-7.778 7.778-1.414-1.414L16.172 13H4v-2z"/></svg>
<span id="t85" class="t" style="left:240.53px;top:98px;font-size:21.17px;line-height:23px;color:#3b82f6;font-weight:700;transform:scaleX(1.0403);">scope-agent</span>
<div style="left:385.3px;top:94px;width:151.2px;height:34.6px;background:#dbeafe;border-radius:8px"></div>
<span id="t86" class="t" style="left:398.57px;top:101px;font-size:17.64px;line-height:20px;color:#2563eb;font-weight:700;letter-spacing:0.5px;transform:scaleX(0.9603);">NOTIFICATION</span>
<span id="t87" class="t" style="left:56.11px;top:144px;font-size:22.93px;line-height:26px;color:#374151;transform:scaleX(1.0053);">Planning complete. All deliverables generated. Awaiting human approval for execution phase.</span>
<div style="left:28.5px;top:218.9px;width:1199.5px;height:169.8px;background:#f9fafb;border-left:5.5px solid #3b82f6;border-radius:16px"></div>
<span id="t88" class="t" style="left:57.03px;top:248px;font-size:18.13px;line-height:20px;color:#9ca3af;font-family:'Liberation Mono',monospace;transform:scaleX(0.9787);">05:29:09 PM</span>
<span id="t89" class="t" style="left:57.22px;top:290px;font-size:21.17px;line-height:23px;color:#3b82f6;font-weight:700;transform:scaleX(1.0443);">scope-agent</span>
<svg style="left:201.9px;top:289.7px" width="24.60" height="24.60" viewBox="0 0 24 24" ><path fill="#9ca3af" d="M16.172 11l-5.364-5.364 1.414-1.414L20 12l-7.778 7.778-1.414-1.414L16.172 13H4v-2z"/></svg>
<span id="t90" class="t" style="left:240.23px;top:290px;font-size:21.17px;line-height:23px;color:#3b82f6;font-weight:700;transform:scaleX(1.0480);">orchestrator</span>
<div style="left:385.3px;top:286.1px;width:117.8px;height:34.6px;background:#dcfce7;border-radius:8px"></div>
<span id="t91" class="t" style="left:398.65px;top:293px;font-size:17.64px;line-height:20px;color:#16a34a;font-weight:700;letter-spacing:0.5px;transform:scaleX(0.8897);">RESPONSE</span>
<span id="t92" class="t" style="left:57px;top:336px;font-size:22.93px;line-height:26px;color:#374151;transform:scaleX(1.0050);">89 work packages confirmed. 87.5% AI confidence. Ready for human review.</span>
<div style="left:28.5px;top:411px;width:1199.5px;height:169.8px;background:#f9fafb;border-left:5.5px solid #3b82f6;border-radius:16px"></div>
<span id="t93" class="t" style="left:57.03px;top:441px;font-size:18.13px;line-height:20px;color:#9ca3af;font-family:'Liberation Mono',monospace;transform:scaleX(0.9787);">05:29:09 PM</span>
<span id="t94" class="t" style="left:57.14px;top:482px;font-size:21.17px;line-height:23px;color:#3b82f6;font-weight:700;transform:scaleX(1.0447);">orchestrator</span>
<svg style="left:201.9px;top:481.8px" width="24.60" height="24.60" viewBox="0 0 24 24" ><path fill="#9ca3af" d="M16.172 11l-5.364-5.364 1.414-1.414L20 12l-7.778 7.778-1.414-1.414L16.172 13H4v-2z"/></svg>
<span id="t95" class="t" style="left:240.53px;top:482px;font-size:21.17px;line-height:23px;color:#3b82f6;font-weight:700;transform:scaleX(1.0403);">scope-agent</span>
<div style="left:385.3px;top:478.2px;width:84px;height:34.6px;background:#fef3c7;border-radius:8px"></div>
<span id="t96" class="t" style="left:399.07px;top:485px;font-size:17.64px;line-height:20px;color:#d97706;font-weight:700;letter-spacing:0.5px;transform:scaleX(0.8775);">QUERY</span>
<span id="t97" class="t" style="left:56.83px;top:528px;font-size:22.93px;line-height:26px;color:#374151;">Confirm final work package count and confidence level.</span>
</div>
<div style="left:2623px;top:822px;width:720.5px;height:672px;background:#fff;border:2px solid #e5e7eb;border-radius:12px;box-shadow:0 2px 5px rgba(0,0,0,.06);overflow:hidden"><div style="left:0;top:0;width:100%;height:109.8px;background:#f9fafb;border-bottom:2px solid #e5e7eb"></div></div>
<svg style="left:2663.7px;top:861.8px" width="29.20" height="29.20" viewBox="0 0 29.2 29.2" ><circle cx="14.600" cy="14.600" r="14.600" fill="#3b82f6"/><rect x="13" y="12.700" width="3.300" height="9.500" fill="#fff"/><rect x="13" y="7.300" width="3.300" height="3.300" fill="#fff"/></svg>
<span id="t98" class="t" style="left:2710.04px;top:863px;font-size:27.44px;line-height:31px;color:#111827;font-weight:700;transform:scaleX(0.9704);">Agent Details</span>
<svg style="left:2941.7px;top:1043.8px" width="85.00" height="85.00" viewBox="0 0 24 24" ><path fill="#d1d5db" d="M9 11.240V7.500C9 6.120 10.120 5 11.500 5S14 6.120 14 7.500v3.740c1.210-.81 2-2.180 2-3.740C16 5.010 13.990 3 11.500 3S7 5.010 7 7.500c0 1.560.790 2.930 2 3.740zm9.840 4.630l-4.540-2.260c-.17-.07-.35-.11-.54-.11H13v-6c0-.83-.67-1.500-1.500-1.500S10 6.670 10 7.500v10.740l-3.430-.72c-.08-.01-.15-.03-.24-.03-.31 0-.59.130-.79.330l-.79.800 4.940 4.940c.270.270.650.440 1.060.440h6.790c.750 0 1.330-.55 1.440-1.280l.750-5.270c.010-.07.020-.14.020-.2 0-.620-.38-1.160-.91-1.380z"/></svg>
<span id="t99" class="t" style="left:2705.13px;top:1165px;font-size:23.52px;line-height:26px;color:#4b5563;letter-spacing:0.5px;">Select an agent to view detailed reasoning and tool</span>
<span id="t100" class="t" style="left:2959.09px;top:1202px;font-size:23.52px;line-height:26px;color:#4b5563;letter-spacing:0.5px;transform:scaleX(1.0064);">calls</span>
<div style="left:640px;top:1538px;width:2703.5px;height:149.7px;background:#fff;border:2px solid #e5e7eb;border-radius:12px;box-shadow:0 2px 5px rgba(0,0,0,.06)"></div>
<svg style="left:679.3px;top:1597px" width="29.60" height="29.60" viewBox="0 0 30 30" ><circle cx="15" cy="15" r="15" fill="#16a34a"/><path d="M8.300 15.300l4.700 4.700 8.800-8.800" stroke="#fff" stroke-width="3.200" fill="none" stroke-linecap="round" stroke-linejoin="round"/></svg>
<span id="t101" class="t" style="left:726.01px;top:1600px;font-size:23.72px;line-height:26px;color:#16a34a;font-weight:700;transform:scaleX(0.9924);">Analysis Complete - 6 agents processed</span>
<div style="left:2776.1px;top:1573.2px;width:252.5px;height:77.5px;background:#fff;border:2px solid #d1d5db;border-radius:12px"></div>
<span id="t102" class="t" style="left:2806.37px;top:1599px;font-size:24.11px;line-height:27px;color:#374151;-webkit-text-stroke:0.7px currentColor;transform:scaleX(1.0282);">Skip to Scenarios</span>
<div style="left:3049.9px;top:1573.2px;width:256.9px;height:77.5px;background:#3b82f6;border-radius:12px"></div>
<svg style="left:3078px;top:1596.2px" width="31.50" height="31.50" viewBox="0 0 24 24" ><path fill="#fff" d="M16.172 11l-5.364-5.364 1.414-1.414L20 12l-7.778 7.778-1.414-1.414L16.172 13H4v-2z"/></svg>
<span id="t103" class="t" style="left:3124.06px;top:1599px;font-size:24.11px;line-height:27px;color:#fff;font-weight:700;transform:scaleX(0.9580);">Review Scope</span>
<script>(function(){var w=window.innerWidth||3840;if(Math.abs(w-3840)>2){document.documentElement.style.zoom=String(w/3840);}})();</script>
</body></html>
